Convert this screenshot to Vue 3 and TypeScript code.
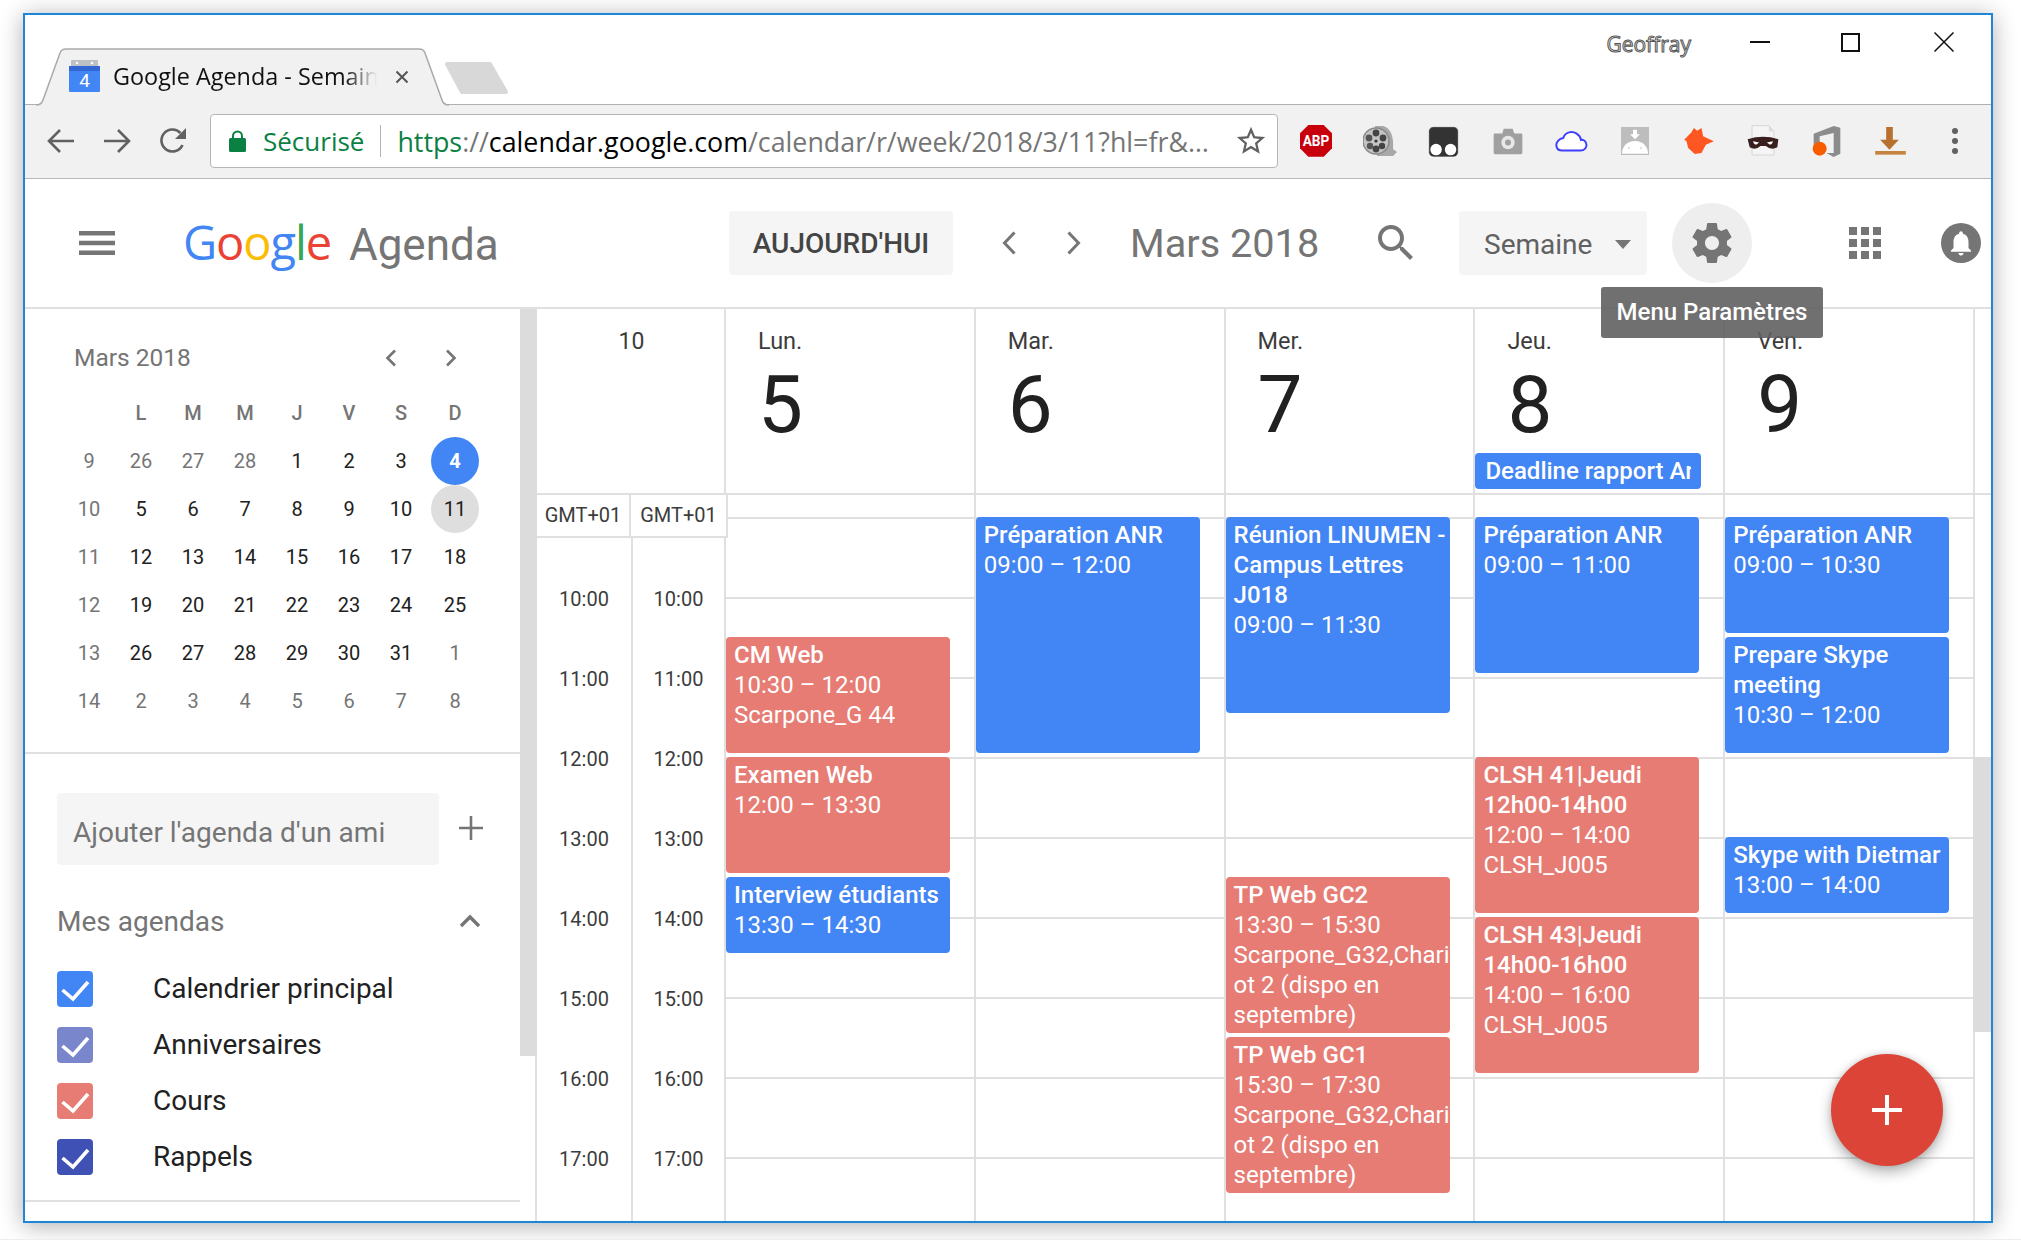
<script setup lang="ts">
interface CalEvent {
  title: string
  lines: string[]
  start: number
  end: number
  color: 'blue' | 'red'
}

interface Day {
  short: string
  num: number
  allDay?: string
  events: CalEvent[]
}

const HOUR = 80
const FIRST_LINE = 22

const days: Day[] = [
  {
    short: 'Lun.',
    num: 5,
    events: [
      { title: 'CM Web', lines: ['10:30 – 12:00', 'Scarpone_G 44'], start: 10.5, end: 12, color: 'red' },
      { title: 'Examen Web', lines: ['12:00 – 13:30'], start: 12, end: 13.5, color: 'red' },
      { title: 'Interview étudiants', lines: ['13:30 – 14:30'], start: 13.5, end: 14.5, color: 'blue' },
    ],
  },
  {
    short: 'Mar.',
    num: 6,
    events: [{ title: 'Préparation ANR', lines: ['09:00 – 12:00'], start: 9, end: 12, color: 'blue' }],
  },
  {
    short: 'Mer.',
    num: 7,
    events: [
      { title: 'Réunion LINUMEN - Campus Lettres J018', lines: ['09:00 – 11:30'], start: 9, end: 11.5, color: 'blue' },
      { title: 'TP Web GC2', lines: ['13:30 – 15:30', 'Scarpone_G32,Chariot 2 (dispo en septembre)'], start: 13.5, end: 15.5, color: 'red' },
      { title: 'TP Web GC1', lines: ['15:30 – 17:30', 'Scarpone_G32,Chariot 2 (dispo en septembre)'], start: 15.5, end: 17.5, color: 'red' },
    ],
  },
  {
    short: 'Jeu.',
    num: 8,
    allDay: 'Deadline rapport Ar',
    events: [
      { title: 'Préparation ANR', lines: ['09:00 – 11:00'], start: 9, end: 11, color: 'blue' },
      { title: 'CLSH 41|Jeudi 12h00-14h00', lines: ['12:00 – 14:00', 'CLSH_J005'], start: 12, end: 14, color: 'red' },
      { title: 'CLSH 43|Jeudi 14h00-16h00', lines: ['14:00 – 16:00', 'CLSH_J005'], start: 14, end: 16, color: 'red' },
    ],
  },
  {
    short: 'Ven.',
    num: 9,
    events: [
      { title: 'Préparation ANR', lines: ['09:00 – 10:30'], start: 9, end: 10.5, color: 'blue' },
      { title: 'Prepare Skype meeting', lines: ['10:30 – 12:00'], start: 10.5, end: 12, color: 'blue' },
      { title: 'Skype with Dietmar', lines: ['13:00 – 14:00'], start: 13, end: 14, color: 'blue' },
    ],
  },
]

const hourLabels = ['10:00', '11:00', '12:00', '13:00', '14:00', '15:00', '16:00', '17:00']

function eventStyle(ev: CalEvent) {
  return {
    top: `${FIRST_LINE + (ev.start - 9) * HOUR}px`,
    height: `${(ev.end - ev.start) * HOUR - 4}px`,
  }
}

interface MiniCell {
  n: number
  muted?: boolean
}

const weekHeads = ['L', 'M', 'M', 'J', 'V', 'S', 'D']

function cells(from: number[], muted: (i: number) => boolean): MiniCell[] {
  return from.map((n, i) => ({ n, muted: muted(i) }))
}

const miniWeeks = [
  { week: 9, days: cells([26, 27, 28, 1, 2, 3, 4], (i) => i < 3) },
  { week: 10, days: cells([5, 6, 7, 8, 9, 10, 11], () => false) },
  { week: 11, days: cells([12, 13, 14, 15, 16, 17, 18], () => false) },
  { week: 12, days: cells([19, 20, 21, 22, 23, 24, 25], () => false) },
  { week: 13, days: cells([26, 27, 28, 29, 30, 31, 1], (i) => i === 6) },
  { week: 14, days: cells([2, 3, 4, 5, 6, 7, 8], () => true) },
]

const calendars = [
  { name: 'Calendrier principal', color: '#4285f4' },
  { name: 'Anniversaires', color: '#7986cb' },
  { name: 'Cours', color: '#e67c73' },
  { name: 'Rappels', color: '#3f51b5' },
]
</script>

<template>
  <div class="screen">
    <div class="window">
      <!-- chrome tabs -->
      <div class="tabstrip">
        <div class="tab">
          <svg class="tab-shape" width="413" height="58" viewBox="0 0 413 58">
            <path d="M0 57 C3 57 6 55 7 52 L24 5 C25 2 27 1 30 1 L383 1 C386 1 388 2 389 5 L406 52 C407 55 410 57 413 57" fill="#f1f1f1" stroke="#a9a9a9" stroke-width="1.5" />
          </svg>
          <svg class="favicon" width="31" height="32" viewBox="0 0 31 32">
            <rect x="2" y="0" width="27" height="8" rx="1" fill="#bdc1c6" />
            <circle cx="8" cy="3" r="1.3" fill="#fff" />
            <circle cx="23" cy="3" r="1.3" fill="#fff" />
            <rect x="0" y="6" width="31" height="26" rx="1" fill="#4285f4" />
            <path d="M0 6 H31 V11 H0Z" fill="#3367d6" />
            <text x="15.5" y="27" text-anchor="middle" font-family="Roboto, sans-serif" font-size="19" fill="#fff">4</text>
          </svg>
          <span class="tab-title">Google Agenda - Semaine du 5 mars</span>
          <svg class="tab-close" width="14" height="14" viewBox="0 0 14 14">
            <path d="M1.5 1.5 L12.5 12.5 M12.5 1.5 L1.5 12.5" stroke="#555" stroke-width="2" />
          </svg>
        </div>
        <svg class="new-tab" width="65" height="32" viewBox="0 0 65 32">
          <path d="M3 2 H46 L62 30 H18 Z" fill="#d8d8d8" stroke="#d8d8d8" stroke-width="4" stroke-linejoin="round" />
        </svg>
        <div class="win-controls">
          <span class="profile">Geoffray</span>
          <span class="win-min"></span>
          <span class="win-max"></span>
          <svg class="win-close" width="20" height="20" viewBox="0 0 20 20">
            <path d="M0.5 0.5 L19.5 19.5 M19.5 0.5 L0.5 19.5" stroke="#111" stroke-width="1.5" />
          </svg>
        </div>
      </div>

      <!-- chrome toolbar -->
      <div class="toolbar">
        <button class="nav-btn">
          <svg width="28" height="26" viewBox="0 0 28 26"><path d="M27 13 H3 M13 2 L2 13 L13 24" fill="none" stroke="#616161" stroke-width="2.6" /></svg>
        </button>
        <button class="nav-btn">
          <svg width="28" height="26" viewBox="0 0 28 26"><path d="M1 13 H25 M15 2 L26 13 L15 24" fill="none" stroke="#616161" stroke-width="2.6" /></svg>
        </button>
        <button class="nav-btn">
          <svg width="28" height="28" viewBox="0 0 28 28"><path d="M23.5 18 A11 11 0 1 1 21.5 6" fill="none" stroke="#616161" stroke-width="2.6" /><path d="M27 1 V12 H16 Z" fill="#616161" /></svg>
        </button>
        <div class="omnibox">
          <svg class="lock" width="17" height="22" viewBox="0 0 17 22">
            <path d="M4 9 V6 A4.5 4.5 0 0 1 13 6 V9" fill="none" stroke="#0b8043" stroke-width="2" />
            <rect x="0" y="8" width="17" height="14" rx="1.5" fill="#0b8043" />
          </svg>
          <span class="secure">Sécurisé</span>
          <span class="omni-sep"></span>
          <span class="url"><span class="url-https">https</span><span class="url-rest">://</span><span class="url-host">calendar.google.com</span><span class="url-rest">/calendar/r/week/2018/3/11?hl=fr&amp;…</span></span>
          <svg class="star" width="34" height="34" viewBox="0 0 24 24">
            <path d="M22 9.24l-7.19-.62L12 2 9.19 8.63 2 9.24l5.46 4.73L5.82 21 12 17.27 18.18 21l-1.63-7.03L22 9.24zM12 15.4l-3.76 2.27 1-4.28-3.32-2.88 4.38-.38L12 6.1l1.71 4.04 4.38.38-3.32 2.88 1 4.28L12 15.4z" fill="#616161" />
          </svg>
        </div>
        <div class="extensions">
          <span class="ext">
            <svg width="32" height="32" viewBox="27 45 96 96">
              <path d="M52 45 H98 L123 70 V115 L98 140 H52 L27 115 V70 Z" fill="#c7000b" />
              <text x="75" y="109" text-anchor="middle" font-family="Roboto, sans-serif" font-weight="700" font-size="46" textLength="80" lengthAdjust="spacingAndGlyphs" fill="#fff">ABP</text>
            </svg>
          </span>
          <span class="ext">
            <svg width="34" height="32" viewBox="0 0 34 32">
              <path d="M12 1 H20 C28 3 31 12 30 24 L34 27 L30 31 H14 Z" fill="#a8a8a8" />
              <circle cx="13" cy="16" r="13" fill="#c4c4c4" stroke="#8a8a8a" stroke-width="1.5" />
              <circle cx="13" cy="8" r="3.4" fill="#444" />
              <circle cx="13" cy="24" r="3.4" fill="#444" />
              <circle cx="6" cy="13" r="3.4" fill="#555" />
              <circle cx="20" cy="13" r="3.4" fill="#444" />
              <circle cx="7" cy="21" r="3.2" fill="#555" />
              <circle cx="19" cy="21" r="3.2" fill="#444" />
              <circle cx="13" cy="16" r="1.6" fill="#333" />
            </svg>
          </span>
          <span class="ext">
            <svg width="31" height="31" viewBox="413 46 92 92">
              <rect x="415" y="48" width="88" height="90" rx="14" fill="#333" stroke="#fff" stroke-width="2" />
              <circle cx="437" cy="116" r="17" fill="#fff" />
              <circle cx="480" cy="116" r="17" fill="#fff" />
            </svg>
          </span>
          <span class="ext">
            <svg width="30" height="27" viewBox="606 54 90 80">
              <path d="M612 70 H634 L638 56 H665 L670 70 H690 Q694 70 694 74 V128 Q694 132 690 132 H612 Q608 132 608 128 V74 Q608 70 612 70Z" fill="#a0a0a0" />
              <circle cx="651" cy="97" r="20" fill="#e8e8e8" />
              <circle cx="651" cy="97" r="9" fill="#a0a0a0" />
            </svg>
          </span>
          <span class="ext">
            <svg width="33" height="22" viewBox="793 58 100 66">
              <path d="M815 120 H870 C885 120 890 108 888 100 C886 90 878 86 872 88 C868 70 850 60 835 65 C825 68 820 76 818 82 C805 84 796 95 797 105 C798 114 805 120 815 120Z" fill="#fff" stroke="#3f3fff" stroke-width="6" />
            </svg>
          </span>
          <span class="ext">
            <svg width="28" height="28" viewBox="3 50 84 84">
              <rect x="3" y="50" width="84" height="84" fill="#bdbdbd" />
              <path d="M39 58 H51 V72 H60 L45 87 L30 72 H39 Z" fill="#fff" />
              <path d="M6 130 C6 108 22 92 45 92 C68 92 84 108 84 130 Z" fill="#fff" />
              <circle cx="27" cy="113" r="2.5" fill="#bdbdbd" />
              <circle cx="63" cy="113" r="2.5" fill="#bdbdbd" />
            </svg>
          </span>
          <span class="ext">
            <svg width="32" height="28" viewBox="190 52 95 84">
              <path d="M193 90 L215 68 L222 55 L232 63 L245 55 L250 80 L282 95 L258 105 L245 130 L225 133 L205 115 L200 95 Z" fill="#ff5722" />
            </svg>
          </span>
          <span class="ext">
            <svg width="32" height="32" viewBox="380 46 95 95">
              <path d="M395 48 H445 L460 65 V135 H395 Z" fill="#f5f5f5" stroke="#c8c8c8" stroke-width="2" />
              <path d="M445 48 V65 H460" fill="#ddd" />
              <path d="M382 88 Q428 74 473 88 L470 112 Q452 122 436 108 L420 108 Q405 122 388 112 Z" fill="#3a1f1f" />
              <path d="M398 94 L416 98 L408 104 Q400 104 398 94Z M457 94 L439 98 L447 104 Q455 104 457 94Z" fill="#fff" />
            </svg>
          </span>
          <span class="ext">
            <svg width="30" height="33" viewBox="575 45 90 97">
              <path d="M580 70 L640 47 L660 52 V130 L640 140 L618 128 H640 V68 L598 78 V100 L580 110 Z" fill="#8c8c8c" />
              <circle cx="598" cy="115" r="21" fill="#f85c00" />
            </svg>
          </span>
          <span class="ext">
            <svg width="31" height="28" viewBox="767 50 92 84">
              <path d="M800 50 H820 V88 H838 L810 118 L782 88 H800 Z" fill="#b8702e" />
              <rect x="767" y="122" width="92" height="11" fill="#c58440" />
            </svg>
          </span>
          <span class="ext">
            <svg width="8" height="28" viewBox="0 0 8 28">
              <circle cx="4" cy="4" r="3" fill="#616161" />
              <circle cx="4" cy="14" r="3" fill="#616161" />
              <circle cx="4" cy="24" r="3" fill="#616161" />
            </svg>
          </span>
        </div>
      </div>

      <!-- calendar header -->
      <header class="app-header">
        <svg class="hamburger" width="36" height="24" viewBox="0 0 36 24">
          <rect y="0" width="36" height="4.5" fill="#757575" />
          <rect y="9.75" width="36" height="4.5" fill="#757575" />
          <rect y="19.5" width="36" height="4.5" fill="#757575" />
        </svg>
        <div class="logo">
          <span class="g-word"><span class="c-blue">G</span><span class="c-red">o</span><span class="c-yellow">o</span><span class="c-blue">g</span><span class="c-green">l</span><span class="c-red">e</span></span>
          <span class="logo-name">Agenda</span>
        </div>
        <button class="today">AUJOURD'HUI</button>
        <svg class="chev-big first" width="14" height="24" viewBox="0 0 14 24"><path d="M12.5 1.5 L2.5 12 L12.5 22.5" fill="none" stroke="#757575" stroke-width="3" /></svg>
        <svg class="chev-big" width="14" height="24" viewBox="0 0 14 24"><path d="M1.5 1.5 L11.5 12 L1.5 22.5" fill="none" stroke="#757575" stroke-width="3" /></svg>
        <div class="month">Mars 2018</div>
        <svg class="search" width="48" height="48" viewBox="0 0 24 24">
          <path d="M15.5 14h-.79l-.28-.27C15.41 12.59 16 11.11 16 9.5 16 5.91 13.09 3 9.5 3S3 5.91 3 9.5 5.91 16 9.5 16c1.61 0 3.09-.59 4.23-1.57l.27.28v.79l5 4.99L20.49 19l-4.99-5zm-6 0C7.01 14 5 11.99 5 9.5S7.01 5 9.5 5 14 7.01 14 9.5 11.99 14 9.5 14z" fill="#757575" />
        </svg>
        <div class="view-select">
          <span>Semaine</span>
          <span class="caret"></span>
        </div>
        <div class="gear">
          <svg width="48" height="48" viewBox="0 0 24 24">
            <path d="M19.43 12.98c.04-.32.07-.64.07-.98s-.03-.66-.07-.98l2.11-1.65c.19-.15.24-.42.12-.64l-2-3.46c-.12-.22-.39-.3-.61-.22l-2.49 1c-.52-.4-1.08-.73-1.69-.98l-.38-2.65C14.46 2.18 14.25 2 14 2h-4c-.25 0-.46.18-.49.42l-.38 2.65c-.61.25-1.17.59-1.69.98l-2.49-1c-.23-.09-.49 0-.61.22l-2 3.46c-.13.22-.07.49.12.64l2.11 1.65c-.04.32-.07.65-.07.98s.03.66.07.98l-2.11 1.65c-.19.15-.24.42-.12.64l2 3.46c.12.22.39.3.61.22l2.49-1c.52.4 1.08.73 1.69.98l.38 2.65c.03.24.24.42.49.42h4c.25 0 .46-.18.49-.42l.38-2.65c.61-.25 1.17-.59 1.69-.98l2.49 1c.23.09.49 0 .61-.22l2-3.46c.12-.22.07-.49-.12-.64l-2.11-1.65zM12 15.5c-1.93 0-3.5-1.57-3.5-3.5s1.57-3.5 3.5-3.5 3.5 1.57 3.5 3.5-1.57 3.5-3.5 3.5z" fill="#757575" />
          </svg>
          <div class="tooltip">Menu Paramètres</div>
        </div>
        <div class="apps">
          <span v-for="i in 9" :key="i"></span>
        </div>
        <div class="bell">
          <svg width="30" height="30" viewBox="0 0 24 24">
            <path d="M12 22c1.1 0 2-.9 2-2h-4c0 1.1.89 2 2 2zm6-6v-5c0-3.07-1.64-5.64-4.5-6.32V4c0-.83-.67-1.5-1.5-1.5s-1.5.67-1.5 1.5v.68C7.63 5.36 6 7.92 6 11v5l-2 2v1h16v-1l-2-2z" fill="#fff" />
          </svg>
        </div>
      </header>

      <div class="main">
        <aside class="sidebar">
          <div class="mini">
            <div class="mini-head">
              <span class="mini-title">Mars 2018</span>
              <svg class="mini-prev" width="12" height="18" viewBox="0 0 12 18"><path d="M10 1.5 L2.5 9 L10 16.5" fill="none" stroke="#757575" stroke-width="2.6" /></svg>
              <svg class="mini-next" width="12" height="18" viewBox="0 0 12 18"><path d="M2 1.5 L9.5 9 L2 16.5" fill="none" stroke="#757575" stroke-width="2.6" /></svg>
            </div>
            <div class="mini-grid">
              <span></span>
              <span v-for="(h, i) in weekHeads" :key="i" class="mini-dow">{{ h }}</span>
              <template v-for="w in miniWeeks" :key="w.week">
                <span class="mini-week">{{ w.week }}</span>
                <span
                  v-for="(d, i) in w.days"
                  :key="i"
                  class="mini-day"
                  :class="{ muted: d.muted, picked: w.week === 9 && i === 6, current: w.week === 10 && i === 6 }"
                >{{ d.n }}</span>
              </template>
            </div>
          </div>

          <div class="add-row">
            <div class="add-input">Ajouter l'agenda d'un ami</div>
            <svg class="add-plus" width="24" height="24" viewBox="0 0 24 24"><path d="M12 0 V24 M0 12 H24" stroke="#757575" stroke-width="2.6" /></svg>
          </div>

          <div class="my-head">
            <span>Mes agendas</span>
            <svg width="22" height="14" viewBox="0 0 22 14"><path d="M2 12 L11 3 L20 12" fill="none" stroke="#757575" stroke-width="3.4" /></svg>
          </div>

          <ul class="cal-list">
            <li v-for="c in calendars" :key="c.name">
              <span class="check" :style="{ background: c.color }">
                <svg width="36" height="36" viewBox="0 0 36 36"><path d="M5.5 19 L16 28 L31 11" fill="none" stroke="#fff" stroke-width="3.6" /></svg>
              </span>
              <span class="cal-name">{{ c.name }}</span>
            </li>
          </ul>
        </aside>

        <div class="side-scroll"><div class="side-thumb"></div></div>

        <section class="cal">
          <div class="head-row">
            <div class="head-gutter">10</div>
            <div v-for="d in days" :key="d.num" class="day-head">
              <div class="dow">{{ d.short }}</div>
              <div class="dnum">{{ d.num }}</div>
              <div v-if="d.allDay" class="allday"><span>{{ d.allDay }}</span></div>
            </div>
            <div class="head-end"></div>
          </div>

          <div class="body-row">
            <div class="gutter">
              <div class="gmt-row">
                <span>GMT+01</span>
                <span>GMT+01</span>
              </div>
              <div class="gutter-cols">
                <div v-for="c in 2" :key="c" class="gutter-col">
                  <div v-for="h in hourLabels" :key="h" class="hour-label">{{ h }}</div>
                </div>
              </div>
            </div>
            <div v-for="d in days" :key="d.num" class="day-col">
              <div class="slot first"></div>
              <div v-for="n in 8" :key="n" class="slot"></div>
              <div
                v-for="ev in d.events"
                :key="ev.title + ev.start"
                class="event"
                :class="ev.color"
                :style="eventStyle(ev)"
              >
                <div class="ev-title">{{ ev.title }}</div>
                <div v-for="l in ev.lines" :key="l">{{ l }}</div>
              </div>
            </div>
            <div class="cal-scroll"><div class="cal-thumb"></div></div>
          </div>

          <button class="fab">
            <svg width="30" height="30" viewBox="0 0 30 30"><path d="M15 0 V30 M0 15 H30" stroke="#fff" stroke-width="4" /></svg>
          </button>
        </section>
      </div>
    </div>
  </div>
</template>

<style>
html,
body {
  margin: 0;
  background: #fff;
  overflow: hidden;
}
</style>

<style scoped>
.screen {
  width: 2021px;
  height: 1240px;
  box-sizing: border-box;
  padding: 13px 0 0 23px;
  border-bottom: 1px solid #eee;
  overflow: hidden;
  font-family: Roboto, "Liberation Sans", sans-serif;
}

.window {
  width: 1970px;
  height: 1210px;
  box-sizing: border-box;
  border: 2px solid #1e86d9;
  background: #fff;
  box-shadow: 0 3px 22px rgba(0, 0, 0, 0.32);
  display: flex;
  flex-direction: column;
  overflow: hidden;
}

button {
  border: 0;
  padding: 0;
  background: none;
  font-family: inherit;
}

/* chrome */
.tabstrip {
  height: 90px;
  flex: none;
  box-sizing: border-box;
  border-bottom: 1px solid #b0b0b0;
  padding-left: 11px;
  display: flex;
  align-items: flex-end;
  font-family: "Open Sans", sans-serif;
}

.tab {
  position: relative;
  width: 413px;
  height: 57px;
  margin-bottom: -1px;
  flex: none;
  display: flex;
  align-items: center;
  padding-left: 33px;
  box-sizing: border-box;
}

.tab-shape {
  position: absolute;
  left: 0;
  top: 0;
}

.favicon {
  position: relative;
  flex: none;
  margin-top: -1px;
}

.tab-title {
  position: relative;
  margin-left: 13px;
  margin-top: -1px;
  width: 264px;
  white-space: nowrap;
  overflow: hidden;
  font-size: 23.4px;
  color: #111;
  -webkit-mask-image: linear-gradient(to right, #000 232px, transparent 264px);
  mask-image: linear-gradient(to right, #000 232px, transparent 264px);
}

.tab-close {
  position: relative;
  margin-left: 18px;
}

.new-tab {
  flex: none;
  margin-left: -5px;
  margin-bottom: 10px;
}

.win-controls {
  margin-left: auto;
  align-self: flex-start;
  display: flex;
  align-items: center;
  height: 20px;
  margin-top: 17px;
}

.profile {
  font-size: 21px;
  color: #f0f0f0;
  -webkit-text-stroke: 1px #555;
  margin-right: 59px;
  position: relative;
  top: 2px;
}

.win-min {
  width: 20px;
  height: 2px;
  background: #111;
  margin-right: 71px;
}

.win-max {
  width: 19px;
  height: 19px;
  box-sizing: border-box;
  border: 2px solid #111;
  margin-right: 74px;
}

.win-close {
  margin-right: 37px;
}

.toolbar {
  height: 74px;
  flex: none;
  box-sizing: border-box;
  background: #f1f1f1;
  border-bottom: 1px solid #b8b8b8;
  padding: 9px 0 0 8px;
  display: flex;
  align-items: flex-start;
}

.nav-btn {
  width: 56px;
  height: 53px;
  display: flex;
  align-items: center;
  justify-content: center;
  flex: none;
}

.omnibox {
  margin-left: 9px;
  width: 1068px;
  height: 54px;
  flex: none;
  box-sizing: border-box;
  background: #fff;
  border: 1px solid #b5b5b5;
  border-radius: 4px;
  display: flex;
  align-items: center;
  padding-left: 18px;
  font-family: "Open Sans", sans-serif;
  font-size: 26px;
}

.secure {
  margin-left: 17px;
  color: #0b8043;
}

.omni-sep {
  width: 1px;
  height: 32px;
  background: #b5b5b5;
  margin-left: 16px;
}

.url {
  margin-left: 16px;
  white-space: nowrap;
  width: 820px;
  overflow: hidden;
  font-size: 26.8px;
}

.url-https {
  color: #0b8043;
}

.url-rest {
  color: #757575;
}

.url-host {
  color: #000;
}

.star {
  margin-left: 17px;
  flex: none;
}

.extensions {
  display: flex;
  margin-left: 6px;
  height: 54px;
}

.ext {
  width: 63.9px;
  display: flex;
  align-items: center;
  justify-content: center;
  flex: none;
}

/* calendar header */
.app-header {
  height: 130px;
  flex: none;
  box-sizing: border-box;
  border-bottom: 2px solid #e0e0e0;
  padding-left: 54px;
  display: flex;
  align-items: center;
  position: relative;
}

.hamburger {
  flex: none;
}

.logo {
  margin-left: 68px;
  width: 546px;
  flex: none;
  display: flex;
  align-items: baseline;
  margin-top: -2px;
}

.g-word {
  font-family: "Open Sans", sans-serif;
  font-size: 47px;
  font-weight: 500;
  letter-spacing: -1.1px;
}

.c-blue {
  color: #4285f4;
}

.c-red {
  color: #ea4335;
}

.c-yellow {
  color: #fbbc05;
}

.c-green {
  color: #34a853;
}

.logo-name {
  margin-left: 18px;
  font-size: 44px;
  color: #757575;
}

.today {
  width: 224px;
  height: 64px;
  flex: none;
  background: #f5f5f5;
  border-radius: 4px;
  font-size: 28px;
  font-weight: 500;
  color: #444;
}

.chev-big {
  flex: none;
  margin-left: 51px;
}

.chev-big.first {
  margin-left: 49px;
}

.month {
  margin-left: 49px;
  width: 242px;
  flex: none;
  font-size: 39.7px;
  color: #757575;
}

.search {
  flex: none;
}

.view-select {
  margin-left: 39px;
  width: 188px;
  height: 64px;
  flex: none;
  box-sizing: border-box;
  padding: 2px 0 0 25px;
  background: #f5f5f5;
  border-radius: 4px;
  display: flex;
  align-items: center;
  font-size: 28px;
  color: #616161;
}

.caret {
  margin-left: 23px;
  width: 0;
  height: 0;
  border-left: 8px solid transparent;
  border-right: 8px solid transparent;
  border-top: 9px solid #757575;
}

.gear {
  margin-left: 25px;
  width: 80px;
  height: 80px;
  flex: none;
  border-radius: 50%;
  background: #eeeeee;
  display: flex;
  align-items: center;
  justify-content: center;
  position: relative;
}

.tooltip {
  position: absolute;
  left: -71px;
  top: 84px;
  width: 222px;
  height: 51px;
  box-sizing: border-box;
  padding-bottom: 2px;
  display: flex;
  align-items: center;
  justify-content: center;
  background: rgba(97, 97, 97, 0.9);
  border-radius: 3px;
  color: #fff;
  font-size: 24px;
  font-weight: 500;
  z-index: 5;
  white-space: nowrap;
}

.apps {
  margin-left: 97px;
  width: 32px;
  flex: none;
  display: grid;
  grid-template-columns: repeat(3, 8px);
  grid-auto-rows: 8px;
  gap: 4px;
}

.apps span {
  background: #757575;
}

.bell {
  margin-left: 60px;
  width: 40px;
  height: 40px;
  flex: none;
  border-radius: 50%;
  background: #757575;
  display: flex;
  align-items: center;
  justify-content: center;
}

/* main */
.main {
  flex: 1;
  min-height: 0;
  display: flex;
}

.sidebar {
  width: 495px;
  flex: none;
}

.mini {
  padding: 24px 0 27px;
  border-bottom: 2px solid #e0e0e0;
}

.mini-head {
  height: 48px;
  margin-bottom: 8px;
  padding: 1px 0 0 49px;
  box-sizing: border-box;
  display: flex;
  align-items: center;
}

.mini-title {
  width: 311px;
  font-size: 24.5px;
  color: #757575;
}

.mini-next {
  margin-left: 48px;
}

.mini-grid {
  margin-left: 38px;
  display: grid;
  grid-template-columns: repeat(7, 52px) 56px;
  grid-auto-rows: 48px;
  align-items: center;
  justify-items: center;
  font-size: 20px;
}

.mini-dow {
  font-weight: 500;
  color: #757575;
}

.mini-week {
  color: #757575;
}

.mini-day {
  width: 48px;
  height: 48px;
  border-radius: 50%;
  display: flex;
  align-items: center;
  justify-content: center;
  color: #212121;
}

.mini-day.muted {
  color: #757575;
}

.mini-day.picked {
  background: #4285f4;
  color: #fff;
  font-weight: 700;
}

.mini-day.current {
  background: #dedede;
}

.add-row {
  margin: 39px 0 0 32px;
  display: flex;
  align-items: center;
}

.add-input {
  width: 382px;
  height: 72px;
  box-sizing: border-box;
  padding: 6px 0 0 16px;
  display: flex;
  align-items: center;
  background: #f5f5f5;
  border-radius: 4px;
  font-size: 28px;
  color: #757575;
}

.add-plus {
  margin: -3px 0 0 20px;
}

.my-head {
  margin: 32px 0 0 32px;
  height: 48px;
  display: flex;
  align-items: center;
  font-size: 28px;
  color: #757575;
}

.my-head span {
  width: 382px;
}

.my-head svg {
  margin-left: 20px;
  margin-top: 0;
}

.cal-list {
  list-style: none;
  margin: 16px 0 0;
  padding: 0 0 15px 32px;
  border-bottom: 2px solid #e0e0e0;
}

.cal-list li {
  height: 56px;
  display: flex;
  align-items: center;
}

.check {
  width: 36px;
  height: 36px;
  flex: none;
  border-radius: 4px;
  display: block;
}

.check svg {
  display: block;
}

.cal-name {
  margin: -2px 0 0 60px;
  font-size: 28px;
  color: #212121;
}

.side-scroll {
  width: 17px;
  flex: none;
  background: linear-gradient(to left, #e0e0e0 2px, transparent 2px);
}

.side-thumb {
  height: 747px;
  background: #dcdcdc;
}

.cal {
  flex: 1;
  min-width: 0;
  position: relative;
  display: flex;
  flex-direction: column;
}

.head-row {
  height: 186px;
  flex: none;
  box-sizing: border-box;
  border-bottom: 2px solid #e0e0e0;
  display: flex;
}

.head-gutter {
  width: 187px;
  flex: none;
  box-sizing: border-box;
  padding: 16px 0 0 2px;
  text-align: center;
  font-size: 23px;
  line-height: 34px;
  color: #3c3c3c;
}

.day-head {
  flex: 1 1 0;
  min-width: 0;
  box-sizing: border-box;
  border-left: 2px solid #e0e0e0;
  padding: 16px 0 0 32px;
  color: #212121;
}

.dow {
  font-size: 23.5px;
  line-height: 32px;
  color: #3c3c3c;
}

.dnum {
  margin-top: 8px;
  font-size: 80px;
  line-height: 80px;
}

.allday {
  margin: 8px 0 0 -32px;
  width: 226px;
  height: 36px;
  box-sizing: border-box;
  padding: 0 10px;
  border-radius: 4px;
  background: #4285f4;
  color: #fff;
  font-size: 24px;
  font-weight: 500;
  line-height: 37px;
}

.allday span {
  display: block;
  white-space: nowrap;
  overflow: hidden;
}

.head-end {
  width: 18px;
  flex: none;
  box-sizing: border-box;
  border-left: 2px solid #e0e0e0;
}

.body-row {
  flex: 1;
  min-height: 0;
  display: flex;
  overflow: hidden;
}

.gutter {
  width: 187px;
  flex: none;
  display: flex;
  flex-direction: column;
}

.gmt-row {
  position: relative;
  z-index: 1;
  width: 191px;
  height: 43px;
  flex: none;
  box-sizing: border-box;
  display: grid;
  grid-template-columns: 94px 95px;
  border-bottom: 2px solid #e0e0e0;
  border-right: 2px solid #e0e0e0;
  background: #fff;
  font-size: 20px;
  line-height: 40px;
  text-align: center;
  color: #3c3c3c;
}

.gmt-row span:first-child {
  border-right: 2px solid #e0e0e0;
}

.gutter-cols {
  flex: 1;
  display: flex;
}

.gutter-col {
  width: 94px;
  padding-top: 21px;
  box-sizing: border-box;
  font-size: 20px;
  color: #3c3c3c;
}

.gutter-col + .gutter-col {
  width: 93px;
  border-left: 2px solid #e0e0e0;
}

.hour-label {
  height: 80px;
  display: flex;
  align-items: center;
  justify-content: center;
}

.day-col {
  flex: 1 1 0;
  min-width: 0;
  position: relative;
  box-sizing: border-box;
  border-left: 2px solid #e0e0e0;
}

.slot {
  height: 80px;
  box-sizing: border-box;
  border-bottom: 2px solid #e0e0e0;
}

.slot.first {
  height: 24px;
}

.event {
  position: absolute;
  left: 0;
  width: 224px;
  box-sizing: border-box;
  padding: 3px 0 0 8px;
  border-radius: 4px;
  color: #fff;
  font-size: 24px;
  line-height: 30px;
  overflow: hidden;
  overflow-wrap: anywhere;
}

.event.blue {
  background: #4285f4;
}

.event.red {
  background: #e67c73;
}

.ev-title {
  font-weight: 500;
}

.cal-scroll {
  width: 18px;
  flex: none;
  box-sizing: border-box;
  border-left: 2px solid #e0e0e0;
  padding-top: 262px;
}

.cal-thumb {
  height: 275px;
  margin-left: -2px;
  background: #dcdcdc;
}

.fab {
  position: absolute;
  right: 48px;
  bottom: 55px;
  width: 112px;
  height: 112px;
  border-radius: 50%;
  background: #db4437;
  box-shadow: 0 6px 14px rgba(0, 0, 0, 0.3), 0 0 6px rgba(0, 0, 0, 0.12);
  display: flex;
  align-items: center;
  justify-content: center;
}
</style>
